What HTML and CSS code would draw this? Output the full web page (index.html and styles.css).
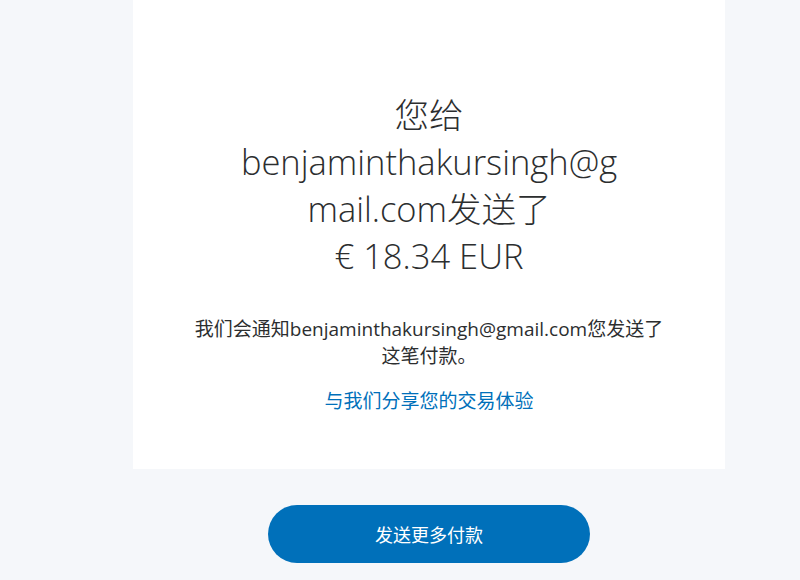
FILE: index.html
```html
<!DOCTYPE html>
<html lang="zh">
<head>
<meta charset="utf-8">
<link rel="stylesheet" href="styles.css">
</head>
<body>
<div class="page">
  <div class="card">
    <h1 class="headline">您给benjaminthakursingh@gmail.com发送了<br>€ 18.34 EUR</h1>
    <p class="note">我们会通知benjaminthakursingh@gmail.com您发送了这笔付款。</p>
    <a class="share" href="#">与我们分享您的交易体验</a>
  </div>
  <button class="send-more">发送更多付款</button>
</div>
</body>
</html>
```

FILE: styles.css
```css
html, body {
  margin: 0;
  padding: 0;
  background: #f5f7fa;
  font-family: "Open Sans", "Noto Sans CJK SC", sans-serif;
}
.page {
  width: 592px;
  margin-left: 133px;
  display: flex;
  flex-direction: column;
  align-items: center;
}
.card {
  box-sizing: border-box;
  width: 592px;
  height: 469px;
  background: #ffffff;
  display: flex;
  flex-direction: column;
  align-items: center;
  padding-top: 91px;
}
.headline {
  margin: 0;
  width: 392px;
  text-align: center;
  font-size: 34.5px;
  font-weight: 300;
  line-height: 47px;
  color: #2c2e2f;
  overflow-wrap: anywhere;
}
.note {
  margin: 37px 0 0;
  width: 476px;
  text-align: center;
  font-size: 19px;
  line-height: 27px;
  color: #2c2e2f;
}
.share {
  margin-top: 19px;
  font-size: 19px;
  line-height: 24px;
  color: #0070ba;
  text-decoration: none;
}
.send-more {
  margin-top: 36px;
  width: 322px;
  height: 58px;
  border: none;
  border-radius: 29px;
  background: #0070ba;
  color: #ffffff;
  font-family: "Open Sans", "Noto Sans CJK SC", sans-serif;
  font-size: 18px;
}
```
